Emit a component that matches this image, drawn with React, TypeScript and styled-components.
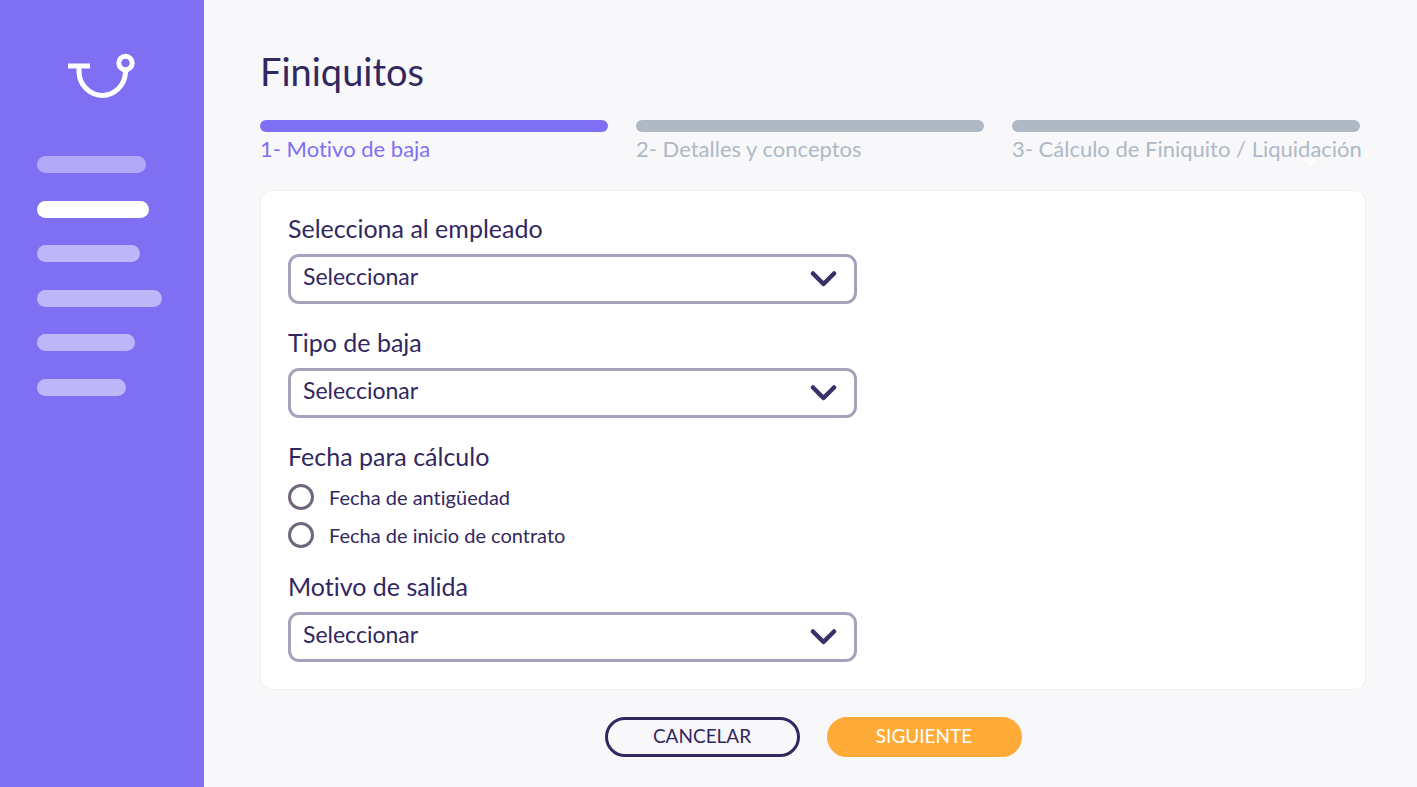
import React from 'react';
import styled, { createGlobalStyle } from 'styled-components';

const navy = '#32285f';
const violet = '#7f70f3';
const grey = '#aeb9c5';

const GlobalStyle = createGlobalStyle`
  *, *::before, *::after { box-sizing: border-box; }
  body {
    margin: 0;
    background: #f8f8fb;
    color: ${navy};
    font-family: Lato, "Open Sans", sans-serif;
    font-variant-ligatures: none;
  }
  button, select, input { font: inherit; color: inherit; }
`;

const Layout = styled.div`
  display: flex;
  min-height: 100vh;
`;

const Sidebar = styled.aside`
  flex: 0 0 204px;
  padding: 52px 37px 0;
  background: ${violet};
`;

const Logo = styled.svg`
  display: block;
  width: 70px;
  height: 48px;
  margin: 0 0 56px 30px;
`;

const Menu = styled.nav`
  display: flex;
  flex-direction: column;
  justify-content: space-between;
  height: 240px;
`;

const MenuItem = styled.a<{ $width: number; $tone: string }>`
  display: block;
  width: ${(p) => p.$width}px;
  height: 17px;
  border-radius: 9px;
  background: ${(p) => p.$tone};
`;

const Main = styled.main`
  flex: 1;
  min-width: 0;
  padding: 47px 51px 30px 56px;
`;

const Title = styled.h1`
  margin: 0;
  font-size: 38px;
  line-height: 48px;
  font-weight: 400;
`;

const Steps = styled.ol`
  display: grid;
  grid-template-columns: repeat(3, minmax(0, 1fr));
  gap: 28px;
  margin: 25px 6px 27px 0;
  padding: 0;
  list-style: none;
`;

const Step = styled.li<{ $active?: boolean }>`
  position: relative;
  color: ${(p) => (p.$active ? violet : grey)};
  font-size: 22px;
  line-height: 28px;
  white-space: nowrap;

  &::before {
    content: '';
    display: block;
    height: 12px;
    margin-bottom: 3px;
    border-radius: 6px;
    background: currentColor;
  }
`;

const StepMark = styled.svg`
  position: absolute;
  right: 44px;
  bottom: -4px;
  width: 12px;
  height: 9px;
`;

const Card = styled.section`
  display: flex;
  flex-direction: column;
  gap: 22px;
  padding: 21px 27px 27px;
  border: 1px solid #efeff1;
  border-radius: 12px;
  background: #fff;
`;

const Field = styled.div`
  max-width: 569px;
`;

const FieldLabel = styled.label`
  display: block;
  margin-bottom: 10px;
  font-size: 25px;
  line-height: 32px;
`;

const SelectBox = styled.div`
  position: relative;
`;

const Select = styled.select`
  display: block;
  width: 100%;
  height: 50px;
  padding: 0 60px 6px 12px;
  appearance: none;
  border: 3px solid #a7a2bb;
  border-radius: 11px;
  background: #fff;
  font-size: 23px;
`;

const Chevron = styled.svg`
  position: absolute;
  top: 16px;
  right: 19px;
  width: 28px;
  height: 18px;
  pointer-events: none;
`;

const RadioGroup = styled.fieldset`
  margin: 0;
  padding: 0;
  border: 0;
`;

const Legend = styled.legend`
  padding: 0;
  margin-bottom: 12px;
  font-size: 25px;
  line-height: 32px;
`;

const RadioList = styled.div`
  display: flex;
  flex-direction: column;
  align-items: flex-start;
  gap: 12px;
`;

const RadioLabel = styled.label`
  display: flex;
  align-items: center;
  gap: 15px;
  font-size: 20px;
  line-height: 26px;
`;

const Radio = styled.input`
  width: 26px;
  height: 26px;
  margin: 0;
  appearance: none;
  border: 3px solid #71667a;
  border-radius: 50%;

  &:checked { background: radial-gradient(${violet} 45%, transparent 50%); }
`;

const Actions = styled.footer`
  display: flex;
  justify-content: center;
  gap: 27px;
  margin-top: 27px;
`;

const Button = styled.button<{ $primary?: boolean }>`
  width: 195px;
  height: 40px;
  padding: 0 0 3px;
  border: 3px solid ${(p) => (p.$primary ? '#ffab38' : navy)};
  border-radius: 20px;
  background: ${(p) => (p.$primary ? '#ffab38' : 'transparent')};
  color: ${(p) => (p.$primary ? '#fff' : navy)};
  font-size: 19px;
`;

const menu = [
  { name: 'Inicio', width: 109, tone: '#b2a9f8' },
  { name: 'Finiquitos', width: 112, tone: '#fff' },
  { name: 'Empleados', width: 103, tone: '#bfb6fa' },
  { name: 'Incidencias', width: 125, tone: '#bfb6fa' },
  { name: 'Reportes', width: 98, tone: '#bfb6fa' },
  { name: 'Ajustes', width: 89, tone: '#bfb6fa' },
];

function SelectField({ id, label }: { id: string; label: string }) {
  return (
    <Field>
      <FieldLabel htmlFor={id}>{label}</FieldLabel>
      <SelectBox>
        <Select id={id}>
          <option>Seleccionar</option>
        </Select>
        <Chevron viewBox="0 0 28 18" aria-hidden="true">
          <path d="M3 3.500 13.500 14 24 3.500" fill="none" stroke="#3b3068" strokeWidth="4.500" strokeLinecap="round" strokeLinejoin="round" />
        </Chevron>
      </SelectBox>
    </Field>
  );
}

export default function App() {
  return (
    <>
      <GlobalStyle />
      <Layout>
        <Sidebar>
          <Logo viewBox="0 0 70 48" fill="none" stroke="#fff" aria-hidden="true">
            <path d="M1 14H23" strokeWidth="5" />
            <path d="M12 14V20A24 24 0 0 0 35 43.500A24 24 0 0 0 58.500 20V18" strokeWidth="5" />
            <circle cx="58.500" cy="11" r="6.700" strokeWidth="5" />
          </Logo>
          <Menu>
            {menu.map((m) => (
              <MenuItem key={m.name} href="#" $width={m.width} $tone={m.tone} />
            ))}
          </Menu>
        </Sidebar>
        <Main>
          <Title>Finiquitos</Title>
          <Steps>
            <Step $active>1- Motivo de baja</Step>
            <Step>2- Detalles y conceptos</Step>
            <Step>
              3- Cálculo de Finiquito / Liquidación
              <StepMark viewBox="0 0 12 9" aria-hidden="true">
                <path d="M1.500 1.500 6 6.500 10.500 1.500" fill="none" stroke="#fff" strokeWidth="2.500" strokeLinecap="round" />
              </StepMark>
            </Step>
          </Steps>
          <Card>
            <SelectField id="empleado" label="Selecciona al empleado" />
            <SelectField id="tipo" label="Tipo de baja" />
            <RadioGroup>
              <Legend>Fecha para cálculo</Legend>
              <RadioList>
                <RadioLabel>
                  <Radio type="radio" name="fecha" />
                  Fecha de antigüedad
                </RadioLabel>
                <RadioLabel>
                  <Radio type="radio" name="fecha" />
                  Fecha de inicio de contrato
                </RadioLabel>
              </RadioList>
            </RadioGroup>
            <SelectField id="motivo" label="Motivo de salida" />
          </Card>
          <Actions>
            <Button type="button">CANCELAR</Button>
            <Button type="button" $primary>SIGUIENTE</Button>
          </Actions>
        </Main>
      </Layout>
    </>
  );
}
